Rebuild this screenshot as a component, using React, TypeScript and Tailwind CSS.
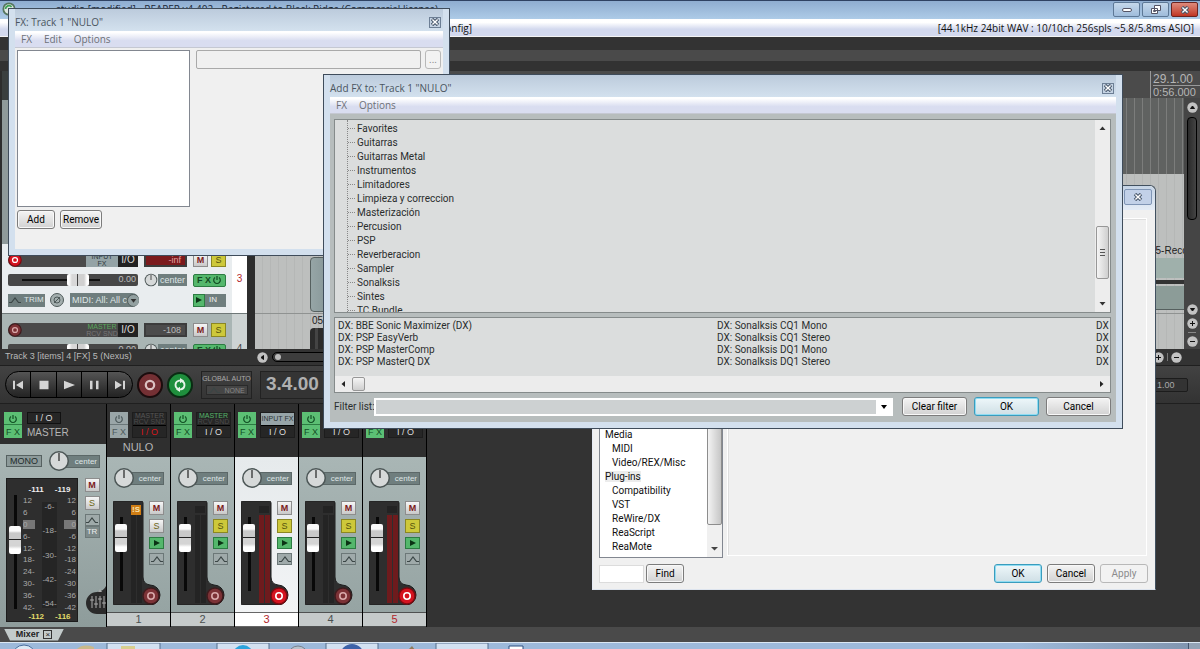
import React from 'react';
import clsx from 'clsx';

const FOLDERS = [
  'Favorites',
  'Guitarras',
  'Guitarras Metal',
  'Instrumentos',
  'Limitadores',
  'Limpieza y correccion',
  'Masterización',
  'Percusion',
  'PSP',
  'Reverberacion',
  'Sampler',
  'Sonalksis',
  'Sintes',
  'TC Bundle',
];

const PLUGINS = [
  ['DX: BBE Sonic Maximizer (DX)', 'DX: Sonalksis CQ1 Mono', 'DX'],
  ['DX: PSP EasyVerb', 'DX: Sonalksis CQ1 Stereo', 'DX'],
  ['DX: PSP MasterComp', 'DX: Sonalksis DQ1 Mono', 'DX'],
  ['DX: PSP MasterQ DX', 'DX: Sonalksis DQ1 Stereo', 'DX'],
];

const PREF_PAGES = [
  { name: 'Media', child: false },
  { name: 'MIDI', child: true },
  { name: 'Video/REX/Misc', child: true },
  { name: 'Plug-ins', child: false },
  { name: 'Compatibility', child: true },
  { name: 'VST', child: true },
  { name: 'ReWire/DX', child: true },
  { name: 'ReaScript', child: true },
  { name: 'ReaMote', child: true },
];

type Track = {
  id: number;
  name?: string;
  routing: 'none' | 'master' | 'input';
  solo: boolean;
  armed: boolean;
  selected?: boolean;
};

const TRACKS: Track[] = [
  { id: 1, name: 'NULO', routing: 'none', solo: false, armed: false },
  { id: 2, routing: 'master', solo: true, armed: false },
  { id: 3, routing: 'input', solo: true, armed: true, selected: true },
  { id: 4, routing: 'master', solo: true, armed: false },
  { id: 5, routing: 'input', solo: true, armed: true },
];

/* ---------- small shared pieces ---------- */

const WinButton: React.FC<{
  children: React.ReactNode;
  className?: string;
  primary?: boolean;
  disabled?: boolean;
}> = ({ children, className, primary, disabled }) => (
  <button
    disabled={disabled}
    className={clsx(
      'flex h-[19px] items-center justify-center rounded-[3px] border text-[10px] leading-none',
      primary && 'border-[#3a9cbd] bg-linear-to-b from-[#eef7fa] to-[#cfdfe5] text-black shadow-[inset_0_0_0_1px_#8fdcf2]',
      disabled && 'border-[#b8b8b8] bg-[#f2f2f2] text-[#8b8b8b]',
      !primary && !disabled && 'border-[#7c7c7c] bg-linear-to-b from-[#f4f4f4] to-[#d2d2d2] text-black shadow-[inset_0_0_0_1px_#f8f8f8]',
      className,
    )}
  >
    {children}
  </button>
);

const CloseGlyph = () => (
  <svg viewBox="0 0 10 8" className="h-2 w-2.5" fill="none">
    <path d="M2 1l6 6M8 1L2 7" stroke="#46566a" strokeWidth="3.4" />
    <path d="M2.4 1.4l5.2 5.2M7.6 1.4L2.4 6.6" stroke="#fff" strokeWidth="1.4" />
  </svg>
);

const PowerIcon = () => (
  <svg viewBox="0 0 10 10" className="size-2.5 shrink-0" fill="none" stroke="currentColor" strokeWidth="1.2">
    <path d="M3 2.6a3.3 3.3 0 1 0 4 0M5 1v4" />
  </svg>
);

const EnvelopeIcon = () => (
  <svg viewBox="0 0 14 10" className="h-2.5 w-3.5 shrink-0" fill="none" stroke="#3b4646" strokeWidth="1.2">
    <path d="M1 7.5h2.5L7 3l3.5 4.5H13" />
  </svg>
);

const RoundButton: React.FC<{ label: string; d: string }> = ({ label, d }) => (
  <button aria-label={label} className="size-[11px] shrink-0">
    <svg viewBox="0 0 11 11" className="size-full">
      <circle cx="5.5" cy="5.5" r="5.2" fill="#c2c2c2" />
      <path d={d} fill="#111" stroke="#111" />
    </svg>
  </button>
);

const Knob = () => (
  <svg viewBox="0 0 22 22" className="size-full">
    <circle cx="11" cy="11" r="10" fill="#4c5656" />
    <circle cx="11" cy="11" r="8.5" fill="#d6d9d9" />
    <path d="M11 3v8" stroke="#222" strokeWidth="1.2" />
  </svg>
);

const MuteButton = () => (
  <button className="flex h-3.5 w-[15px] items-center justify-center border border-[#8d8d8d] bg-linear-to-b from-[#f6f6f6] to-[#c9c9c9] text-[9px] leading-none font-bold text-[#7a1a1a]">
    M
  </button>
);

const SoloButton: React.FC<{ on?: boolean }> = ({ on }) => (
  <button
    className={clsx(
      'flex h-3.5 w-[15px] items-center justify-center border text-[9px] leading-none',
      on ? 'border-[#8b8722] bg-[#cdc83a] text-[#55510c]' : 'border-[#8d8d8d] bg-linear-to-b from-[#f6f6f6] to-[#c9c9c9] text-[#6b6413]',
    )}
  >
    S
  </button>
);

const RecordButton: React.FC<{ on: boolean; className: string }> = ({ on, className }) => (
  <button aria-label="Record arm" className={clsx('shrink-0', className)}>
    <svg viewBox="0 0 18 18" className="size-full" fill="none">
      <circle cx="9" cy="9" r="8" fill={on ? '#d5131f' : '#7c3236'} stroke={on ? '#7d0a10' : '#3f1b1d'} strokeWidth="1.5" />
      <circle cx="9" cy="9" r="3.2" stroke={on ? '#fff' : '#d9a9aa'} strokeWidth="1.6" />
    </svg>
  </button>
);

/* ---------- main window: track panel and arrange ---------- */

const TrackRow: React.FC<{ id: number; selected?: boolean; peak: string }> = ({ id, selected, peak }) => (
  <div className={clsx('flex h-[70px] shrink-0 border-b border-[#6f7878]', selected ? 'bg-[#e9edef]' : 'bg-[#a9b5b4]')}>
    <div className="flex flex-1 flex-col gap-1.5 pt-[9px] pl-1.5">
      <div className="flex h-3.5 items-center">
        <div className="flex h-3.5 w-[130px] items-center rounded-l-full bg-[#4a4a4a]">
          <RecordButton on={!!selected} className="size-3.5" />
          <span
            className={clsx(
              'ml-auto flex h-3.5 w-8 flex-col items-center justify-center text-[7px] leading-[7px] whitespace-nowrap',
              selected ? 'bg-[#94a3a6] text-[#2e3a3c]' : 'text-[#58a85c]',
            )}
          >
            <span>{selected ? 'INPUT' : 'MASTER'}</span>
            <span className={selected ? '' : 'text-[#777]'}>{selected ? 'FX' : 'RCV SND'}</span>
          </span>
          <button className="h-3.5 w-5 bg-[#222] text-[10px] leading-none text-[#ddd]">I/O</button>
        </div>
        <span
          className={clsx(
            'ml-1.5 h-3.5 w-[43px] border-2 border-[#3c3c3c] pr-1 text-right text-[9px] leading-[10px]',
            selected ? 'bg-[#7b1a1d] text-[#e2a0a0]' : 'bg-[#4c4c4c] text-[#bbb]',
          )}
        >
          {peak}
        </span>
        <span className="ml-1.5 flex gap-[3px]">
          <MuteButton />
          <SoloButton on />
        </span>
      </div>
      <div className="flex h-3.5 items-center">
        <div className="flex h-3 w-[130px] items-center rounded-xs bg-[#474747] pr-0.5">
          <input
            type="range"
            aria-label={`Volume, track ${id}`}
            defaultValue={80}
            className="ml-3.5 h-3.5 w-[78px] appearance-none bg-[linear-gradient(#111,#111)] bg-[length:100%_2px] bg-center bg-no-repeat [&::-webkit-slider-thumb]:h-3 [&::-webkit-slider-thumb]:w-[22px] [&::-webkit-slider-thumb]:appearance-none [&::-webkit-slider-thumb]:rounded-xs [&::-webkit-slider-thumb]:bg-[linear-gradient(90deg,#fff_0_2px,#d8d8d8_5px_10px,#444_10px_11px,#d0d0d0_11px_17px,#fff_20px)]"
          />
          <span className="ml-auto text-[9px] text-[#bdbdbd]">0.00</span>
        </div>
        <span className="ml-1.5 size-3.5">
          <Knob />
        </span>
        <span className="h-3 w-[29px] bg-[#6f7e7e] pl-0.5 text-[9px] leading-3 text-[#dfe6e6]">center</span>
        <button className="ml-1.5 flex h-[13px] w-[33px] items-center justify-between rounded-xs border border-[#2c7c42] bg-[#54b76c] px-[3px] text-[9px] leading-none font-bold whitespace-nowrap text-[#114a22]">
          F X <PowerIcon />
        </button>
      </div>
      <div className="flex h-3.5 items-center">
        <button className="flex h-[13px] w-[37px] items-center bg-[#6f7e7e] text-[8px] leading-none text-[#dfe6e6]">
          <EnvelopeIcon />
          <span className="ml-0.5">TRIM</span>
        </button>
        <button aria-label="Phase" className="ml-[5px] size-3.5">
          <svg viewBox="0 0 14 14" className="size-full" fill="none" stroke="#4e5a5a">
            <circle cx="7" cy="7" r="6.5" fill="#a3aeae" />
            <circle cx="7" cy="7" r="3" />
            <path d="M4 10l6-6" />
          </svg>
        </button>
        <button className="ml-1.5 flex h-3.5 w-[69px] items-center justify-between overflow-hidden rounded-r-full bg-[#6f7e7e] pl-0.5 text-[9px] leading-none whitespace-nowrap text-[#dfe6e6]">
          MIDI: All: All c
          <svg viewBox="0 0 14 14" className="size-[13px] shrink-0">
            <circle cx="7" cy="7" r="6.5" fill="#93a1a1" stroke="#4e5a5a" />
            <path d="M4 5.5h6L7 9.5z" fill="#333" />
          </svg>
        </button>
        <button className="ml-[54px] flex h-[13px] w-[33px] items-center gap-1 bg-[#6f7e7e] text-[8px] leading-none text-[#eee]">
          <span className="flex h-[13px] w-3 items-center justify-center border border-[#2c7c42] bg-[#54b76c]">
            <svg viewBox="0 0 8 8" className="size-2" fill="#0b3315">
              <path d="M1 1l6 3-6 3z" />
            </svg>
          </span>
          IN
        </button>
      </div>
    </div>
    <div
      className={clsx(
        'flex w-[15px] items-center justify-center text-[10px]',
        selected ? 'bg-white text-[#b3262c]' : 'bg-[#cdd3d3] text-[#444]',
      )}
    >
      {id}
    </div>
  </div>
);

const LANE = 'bg-[repeating-linear-gradient(90deg,#bdbfbe_0_7px,#b5b7b6_7px_8px)]';

const Arrange = () => (
  <main className="flex min-h-0 flex-1 overflow-hidden bg-[#2d2d2d]">
    <section className="flex w-[247px] shrink-0 flex-col overflow-hidden pl-0.5">
      <div className="h-[29px] shrink-0 bg-[#3a3f3f]" />
      <div className="h-36 shrink-0 bg-[#8f9a9a]" />
      <TrackRow id={3} selected peak="-inf" />
      <TrackRow id={4} peak="-108" />
    </section>
    <section className="ml-2 flex min-w-0 flex-1 flex-col overflow-hidden">
      <div className="flex h-[27px] shrink-0 justify-end bg-[#4b4b4b]">
        <div className="w-[50px] border-l border-[#999] pt-0.5 pl-0.5 text-[11px] leading-3 whitespace-nowrap text-[#b5b5b5]">
          <div className="border-b border-[#999] text-[12px]">29.1.00</div>
          <div>0:56.000</div>
        </div>
      </div>
      <div className="flex min-h-0 flex-1">
        <div className="flex min-w-0 flex-1 flex-col overflow-hidden">
          <div className="h-[76px] shrink-0 bg-[repeating-linear-gradient(90deg,#606261_0_7px,#7c7d7c_7px_8px)]" />
          <div className={clsx('h-[70px] shrink-0', LANE)} />
          <div className={clsx('flex h-[70px] shrink-0 justify-between border-b border-[#8f9291]', LANE)}>
            <div className="mt-[13px] ml-[55px] h-[55px] w-8 rounded-l-sm border border-[#56605f] bg-linear-to-r from-[#96a5a6] to-[#7d8d8e]" />
            <div className="w-[34px] overflow-hidden text-[10px] leading-[14px] whitespace-nowrap text-[#222]">
              05-Record
              <div className="h-5 bg-[#9fb0ab]" />
              <div className="my-0.5 h-1 bg-[#333]" />
              <div className="h-6 border-b border-[#56605f] bg-[#8c9c98]" />
            </div>
          </div>
          <div className={clsx('flex-1', LANE)}>
            <div className="ml-[55px] w-8 text-[10px] leading-[14px] text-[#222]">
              <div className="pl-0.5">05</div>
              <div className="h-6 rounded-tl-sm bg-[repeating-linear-gradient(90deg,#2b2b2b_0_5px,#444_5px_8px)]" />
            </div>
          </div>
        </div>
        <div className="flex w-4 flex-col items-center bg-[#454545] pt-1">
          <RoundButton label="Scroll up" d="M3.5 6.5h4L5.5 4z" />
          <div className="mt-1 h-[103px] w-2.5 rounded-sm border border-black bg-linear-to-r from-[#2a2a2a] to-[#444]" />
          <div className="mt-auto flex flex-col items-center gap-[3px] pb-0.5">
            <RoundButton label="Scroll down" d="M3.5 4.5h4L5.5 7z" />
            <RoundButton label="Zoom in vertically" d="M3 5.5h5M5.5 3v5" />
            <span className="h-px w-2 bg-[#888]" />
            <RoundButton label="Zoom out vertically" d="M3 5.5h5" />
          </div>
        </div>
      </div>
    </section>
  </main>
);

const StatusRow = () => (
  <div className="flex h-4 shrink-0 items-center bg-[#333] text-[9px] text-[#b9b9b9]">
    <span className="w-[257px] pl-[5px]">Track 3 [items] 4 [FX] 5 (Nexus)</span>
    <RoundButton label="Scroll left" d="M6.5 3.5v4L4 5.5z" />
    <div className="mx-1 flex h-2.5 flex-1 items-center rounded-full border border-black bg-[#3d3d3d] pl-0.5">
      <span className="size-1.5 rounded-full bg-[#bbb]" />
    </div>
    <div className="flex items-center gap-[3px] pr-[18px]">
      <RoundButton label="Zoom in" d="M3 5.5h5M5.5 3v5" />
      <span className="h-2 w-px bg-[#777]" />
      <RoundButton label="Zoom out" d="M3 5.5h5" />
    </div>
  </div>
);

const TRANSPORT = [
  { label: 'Go to start', d: 'M1 1h2v10H1zM11 1v10L4 6z' },
  { label: 'Stop', d: 'M1.500 1h9v10h-9z' },
  { label: 'Play', d: 'M1 1l11 5L1 11z' },
  { label: 'Pause', d: 'M2 1h2.500v10H2zM8 1h2.500v10H8z' },
  { label: 'Go to end', d: 'M1 1l7 5-7 5zM9 1h2v10H9z' },
];

const Transport = () => (
  <div className="flex h-[39px] shrink-0 items-center border-y border-[#1f1f1f] bg-linear-to-b from-[#424242] to-[#333] pl-[5px]">
    <div className="flex h-[27px] w-32 divide-x divide-black overflow-hidden rounded-full border border-black bg-linear-to-b from-[#555] to-[#232323]">
      {TRANSPORT.map((t) => (
        <button key={t.label} aria-label={t.label} className="flex flex-1 items-center justify-center">
          <svg viewBox="0 0 12 12" className="h-2.5 w-3" fill="#d4d4d4" preserveAspectRatio="none">
            <path d={t.d} />
          </svg>
        </button>
      ))}
    </div>
    <button aria-label="Record" className="ml-1 size-[26px]">
      <svg viewBox="0 0 26 26" className="size-full">
        <circle cx="13" cy="13" r="12" fill="#743034" stroke="#1b0c0d" strokeWidth="2" />
        <circle cx="13" cy="13" r="4.2" fill="none" stroke="#dcc3c3" strokeWidth="2.2" />
      </svg>
    </button>
    <button aria-label="Repeat" className="ml-1 size-[26px]">
      <svg viewBox="0 0 26 26" className="size-full" fill="none">
        <circle cx="13" cy="13" r="12" fill="#1f8f3d" stroke="#0a2c13" strokeWidth="2" />
        <path d="M11.400 17.200a4.500 4.500 0 0 1 .6-8.600h2M14.600 8.800a4.500 4.500 0 0 1-.6 8.600h-2" stroke="#e8f5ea" strokeWidth="1.8" />
        <path d="M13 6l4 2.600-4 2.600zM13 14.800l-4 2.600 4 2.600z" fill="#e8f5ea" />
      </svg>
    </button>
    <div className="ml-2 flex h-7 w-[51px] flex-col items-center justify-center gap-0.5 border border-[#222] text-[7px] leading-[9px] whitespace-nowrap text-[#aaa]">
      <span>GLOBAL AUTO</span>
      <button className="flex h-2.5 w-[42px] items-center border border-[#2a2a2a] bg-[#454545] text-[#858585]">
        <EnvelopeIcon />
        <span className="ml-1">NONE</span>
      </button>
    </div>
    <div className="ml-2 flex h-7 flex-1 items-center border border-[#222] bg-[#343434] pl-[5px] text-[19px] font-bold text-[#b0b0b0]">
      3.4.00
    </div>
    <div className="mr-3 ml-10 h-3.5 w-10 rounded-xs border border-[#1c1c1c] bg-[#333] pl-2 text-[9px] leading-3 text-[#aaa]">1.00</div>
  </div>
);

/* ---------- mixer ---------- */

const FxBlock: React.FC<{ on: boolean }> = ({ on }) => (
  <button
    className={clsx(
      'flex h-[26px] w-[18px] flex-col items-center justify-between text-[9px] leading-[12px]',
      on ? 'bg-[#5cbf74] text-[#124f24]' : 'bg-[#9aa6a8] text-[#4d5a5c]',
    )}
  >
    <span className={clsx('flex w-full justify-center border-b pt-0.5', on ? 'border-[#2c7c42]' : 'border-[#6c787a]')}>
      <PowerIcon />
    </span>
    <span>F X</span>
  </button>
);

const VFADER =
  'appearance-none bg-[linear-gradient(#080808,#080808)] bg-[length:3px_100%] bg-center bg-no-repeat [direction:rtl] [writing-mode:vertical-lr] [&::-webkit-slider-thumb]:h-7 [&::-webkit-slider-thumb]:w-3 [&::-webkit-slider-thumb]:appearance-none [&::-webkit-slider-thumb]:rounded-xs [&::-webkit-slider-thumb]:bg-[linear-gradient(#fafafa_0_5px,#c9c9c9_7px_13px,#222_13px_14px,#d4d4d4_14px_20px,#fff_23px)]';

const PanKnob = () => (
  <div className="flex items-center">
    <span className="z-10 size-[22px] shrink-0">
      <Knob />
    </span>
    <span className="-ml-1 h-[13px] flex-1 border border-[#5c6868] bg-[#6f7e7e] pr-0.5 text-right text-[8px] leading-[11px] text-[#dfe6e6]">
      center
    </span>
  </div>
);

const EnvButton = () => (
  <button aria-label="Envelopes" className="flex h-3 w-[15px] items-center justify-center border border-[#6c7878] bg-[#9faaaa]">
    <EnvelopeIcon />
  </button>
);

const ChannelStrip: React.FC<{ track: Track }> = ({ track }) => (
  <div className="flex w-16 flex-col border-r border-black">
    <div className="h-[53px] bg-[#2f2f2f] pt-2 pl-[3px]">
      <div className="flex gap-1">
        <FxBlock on={track.routing !== 'none'} />
        <div className="flex h-[26px] w-[35px] flex-col border border-[#1d1d1d] bg-[#262626] text-center text-[7px] leading-[7px] whitespace-nowrap">
          {track.routing === 'input' ? (
            <span className="h-3 bg-[#97a4a8] leading-3 text-[#2b3436]">INPUT FX</span>
          ) : (
            <span className="flex h-3 flex-col leading-[6px]">
              <span className={track.routing === 'master' ? 'text-[#55b569]' : 'text-[#555]'}>MASTER</span>
              <span className="text-[#4c4c4c]">RCV SND</span>
            </span>
          )}
          <button className={clsx('h-3 border-t border-black text-[9px] leading-3', track.routing === 'none' ? 'text-[#d8161c]' : 'text-[#ddd]')}>
            I / O
          </button>
        </div>
      </div>
      <div className="pt-0.5 pr-1 text-center text-[11px] leading-[14px] text-[#b5b5b5]">{track.name}</div>
    </div>
    <div className={clsx('h-[155px] pt-2.5 pr-1.5 pl-1.5', track.selected ? 'bg-linear-to-b from-[#e6eaec] to-[#f2f4f5]' : 'bg-linear-to-b from-[#a9b6b5] to-[#96a4a3]')}>
      <PanKnob />
      <div className="relative mt-3 flex h-[104px]">
        <svg viewBox="0 0 52 104" className="absolute inset-0 h-[104px] w-[52px]">
          <path d="M2 0h26q2 0 2 2v74q0 7 7 8a10 10 0 0 1 0 20H2q-2 0-2-2V2q0-2 2-2z" fill="#2e2e2e" stroke="#1c1c1c" />
          <path d="M18 5h10v7H18z" fill="#232323" />
          <path d="M18 14h5v88h-5zM24 14h5v88h-5z" fill={track.armed ? '#6e1b1d' : '#242424'} />
        </svg>
        <input
          type="range"
          aria-label={`Fader ${track.id}`}
          defaultValue={84}
          className={clsx('relative mt-4 ml-0.5 h-[74px] w-3', VFADER)}
        />
        {!track.solo && (
          <span className="relative mt-1 ml-1 h-2.5 w-2.5 bg-[#cf7d14] text-center text-[8px] leading-2.5 font-bold text-[#f6e3b0]">!S</span>
        )}
        <div className="relative ml-auto flex flex-col gap-1">
          <MuteButton />
          <SoloButton on={track.solo} />
          <button aria-label="Monitor" className="flex h-3 w-[15px] items-center justify-center border border-[#2c7c42] bg-[#54b76c]">
            <svg viewBox="0 0 8 8" className="size-2" fill="#0b3315">
              <path d="M1 1l6 3-6 3z" />
            </svg>
          </button>
          <EnvButton />
        </div>
        <RecordButton on={track.armed} className="absolute right-1 bottom-0 size-[18px]" />
      </div>
    </div>
    <div
      className={clsx(
        'h-[15px] border-y border-black/60 text-center text-[11px] leading-[13px]',
        track.selected ? 'bg-white' : 'bg-[#c5caca]',
        track.armed ? 'text-[#b3262c]' : 'text-[#4a5050]',
      )}
    >
      {track.id}
    </div>
  </div>
);

const Scale: React.FC<{ marks: string[]; className: string }> = ({ marks, className }) => (
  <div className={clsx('flex flex-col justify-between text-[8px] leading-[9px] text-[#aaa]', className)}>
    {marks.map((m) => (
      <span key={m} className={m === '0' ? 'bg-[#777]' : ''}>
        {m}
      </span>
    ))}
  </div>
);

const MasterStrip = () => (
  <div className="flex w-[107px] flex-col border-r border-black">
    <div className="flex h-10 gap-[5px] bg-[#2f2f2f] pt-2 pl-1">
      <FxBlock on />
      <div>
        <button className="block h-3 w-[34px] border border-[#111] bg-[#262626] text-[9px] leading-2.5 text-[#ddd]">I / O</button>
        <div className="pt-px text-[10px] leading-4 text-[#b5b5b5]">MASTER</div>
      </div>
    </div>
    <div className="flex-1 bg-linear-to-b from-[#a9b6b5] to-[#8e9c9b] pt-1.5 pl-1.5">
      <div className="flex items-center gap-1.5 pr-1.5">
        <button className="h-3 w-9 border border-[#566161] bg-[#8d9a9a] text-[9px] leading-2.5 text-[#222c2c]">MONO</button>
        <div className="flex-1">
          <PanKnob />
        </div>
      </div>
      <div className="mt-1.5 flex">
        <div className="flex h-36 w-[72px] border border-[#1c1c1c] bg-[#2e2e2e]">
          <input type="range" aria-label="Master fader" defaultValue={64} className={clsx('mt-4 ml-0.5 h-[114px] w-3', VFADER)} />
          <div className="flex flex-1 flex-col pt-1.5 pr-px pl-0.5">
            <div className="flex justify-around text-[8px] leading-[10px] font-bold text-[#eee]">
              <span>-111</span>
              <span>-119</span>
            </div>
            <div className="flex justify-between pt-px">
              <Scale marks={['12', '6', '0', '6-', '12-', '18-', '24-', '30-', '36-', '42-']} className="h-[116px]" />
              <Scale marks={['-6-', '-18-', '-30-', '-42-', '-54-']} className="mt-1.5 h-[106px] bg-[#252525] text-center" />
              <Scale marks={['12', '6', '0', '-6', '-12', '-18', '-24', '-30', '-36', '-42']} className="h-[116px] text-right" />
            </div>
            <div className="flex justify-around text-[8px] leading-[9px] font-bold text-[#e2dc6a]">
              <span>-112</span>
              <span>-116</span>
            </div>
          </div>
        </div>
        <div className="flex flex-1 flex-col items-center gap-1">
          <MuteButton />
          <SoloButton />
          <div>
            <EnvButton />
            <button className="block h-3 w-[15px] border border-[#6c7878] bg-[#7d8a8a] text-[8px] leading-2.5 text-[#eee]">TR</button>
          </div>
          <svg viewBox="0 0 21 28" className="mt-auto mb-2 ml-auto h-7 w-[21px] shrink-0" stroke="#aaa" fill="none">
            <path d="M21 0q-2 5-9 6a11 11 0 0 0 0 22h9z" fill="#2a2a2a" stroke="none" />
            <path d="M13 6l2-3 2 3z" fill="#aaa" stroke="none" />
            <path d="M7 10v12M11 10v12M15 10v12M19 10v12M5 14h4M9 18h4M13 13h4M17 17h4" />
          </svg>
        </div>
      </div>
    </div>
  </div>
);

const Mixer = () => (
  <>
    <section className="flex h-[223px] shrink-0 bg-[#333]">
      <MasterStrip />
      {TRACKS.map((t) => (
        <ChannelStrip key={t.id} track={t} />
      ))}
    </section>
    <div className="flex h-[15px] shrink-0 items-center bg-[#4a4a4a] pl-1">
      <button className="flex h-3 w-[60px] items-center justify-center gap-1 bg-[#c3cbcb] text-[9px] leading-none font-bold text-[#222] [clip-path:polygon(0_0,100%_0,90%_100%,10%_100%)]">
        Mixer
        <span className="flex size-[9px] items-center justify-center border border-[#333] text-[8px] leading-none font-normal">×</span>
      </button>
    </div>
  </>
);

const Taskbar = () => (
  <footer className="flex h-[7px] shrink-0 overflow-hidden border-t border-[#dbe7f3] bg-linear-to-r from-[#9db9da] from-85% to-[#7f93ad]">
    <svg viewBox="0 0 540 7" className="h-[7px] w-[540px]">
      <circle cx="24" cy="14" r="12" fill="#dce9f5" stroke="#4a6e9e" />
      <path d="M76 7q6-7 18-3v3z" fill="#c9b98a" />
      <path d="M107 0h53v7h-53zM217 0h52v7h-52zM326 0h52v7h-52zM436 0h52v7h-52z" fill="#d3e1f1" stroke="#56718f" />
      <path d="M121 3h14v4h-14z" fill="#d8cf8f" />
      <circle cx="243" cy="12" r="10" fill="#2ba3dc" />
      <circle cx="298" cy="13" r="10" fill="#b9c3cd" stroke="#78828e" />
      <circle cx="352" cy="13" r="12" fill="#3d62a8" />
      <path d="M408 7l4-4 3 4z" fill="#8d7d5c" />
      <path d="M509 3h14v4h-14z" fill="#fff" stroke="#2d4f80" />
    </svg>
    <span className="ml-auto w-3 border-l border-[#44566e] bg-[#93a3b6]" />
  </footer>
);

const MainWindow = () => (
  <div className="flex h-full flex-col">
    <header className="flex h-[19px] shrink-0 items-start border-t border-[#2f4262] bg-linear-to-b from-[#8fadd0] to-[#adcbe7]">
      <svg viewBox="0 0 16 16" className="mt-px ml-0.5 size-3.5" fill="none">
        <circle cx="8" cy="8" r="6.5" fill="#dfe7e2" stroke="#56765e" strokeWidth="2" />
        <path d="M4 8a4 4 0 0 1 7-2.5" stroke="#3fa153" strokeWidth="2" />
      </svg>
      <h1 className="ml-10 text-[10px] leading-[17px] text-[#1c2836] [font-family:'Open_Sans',sans-serif]">
        studio [modified] - REAPER v4.402 - Registered to Black Ridge (Commercial license)
      </h1>
      <div className="mt-px mr-0.5 ml-auto flex gap-0.5">
        <button aria-label="Minimize" className="flex h-[15px] w-[27px] items-center justify-center rounded-xs border border-[#5d7896] bg-linear-to-b from-[#c5d8eb] to-[#9fbcdb]">
          <span className="h-1 w-2.5 rounded-xs border border-[#556] bg-white" />
        </button>
        <button aria-label="Restore" className="flex h-[15px] w-[27px] items-center justify-center rounded-xs border border-[#5d7896] bg-linear-to-b from-[#c5d8eb] to-[#9fbcdb]">
          <svg viewBox="0 0 12 10" className="h-2.5 w-3" fill="#fff" stroke="#556">
            <path d="M4.5.5h6v5h-6zM1.500 3.500h6v5h-6zM3.500 5.500h2v1h-2z" />
          </svg>
        </button>
        <button aria-label="Close" className="flex h-[15px] w-[27px] items-center justify-center rounded-xs border border-[#6b2420] bg-linear-to-b from-[#de8a7c] to-[#bf3422]">
          <CloseGlyph />
        </button>
      </div>
    </header>
    <div className="flex h-[18px] shrink-0 items-center justify-between border-b border-[#f4f4f4] bg-linear-to-b from-white from-20% to-[#d3d9ee] to-60% pr-1.5 text-[10px] leading-none text-[#111] [font-family:'Open_Sans',sans-serif]">
      <span className="w-[472px] text-right">config]</span>
      <span>[44.1kHz 24bit WAV : 10/10ch 256spls ~5.8/5.8ms ASIO]</span>
    </div>
    <div className="h-[34px] shrink-0 bg-[linear-gradient(#333_0_13px,#4a4a4a_13px_24px,#323232_24px)]" />
    <Arrange />
    <StatusRow />
    <Transport />
    <Mixer />
    <Taskbar />
  </div>
);

/* ---------- floating dialogs ---------- */

const DialogTitle: React.FC<{ title: string; menu: string[] }> = ({ title, menu }) => (
  <>
    <div className="flex h-[22px] items-center justify-between bg-linear-to-b from-[#bccbdc] to-[#d3e1ee] pt-1 pr-0.5 text-[10px] text-[#4a5560] [font-family:'Open_Sans',sans-serif]">
      <h2>{title}</h2>
      <button aria-label={`Close ${title}`} className="flex h-[11px] w-3 items-center justify-center border border-[#6d7f95] bg-[#c5d3e3]">
        <CloseGlyph />
      </button>
    </div>
    <nav className="flex h-[17px] items-center gap-3 border-b border-[#c5c8d2] bg-linear-to-b from-white from-10% to-[#d9ddf0] to-60% pl-1.5 text-[10px] leading-none text-[#6d7178] [font-family:'Open_Sans',sans-serif]">
      {menu.map((m) => (
        <button key={m}>{m}</button>
      ))}
    </nav>
  </>
);

const PreferencesWindow = () => (
  <div className="absolute top-[185px] left-[592px] flex h-[405px] w-[564px] flex-col rounded-t-md border border-[#41505f] border-b-[#dde4ee] border-l-[#e6ebf5] bg-[#f0f0f0] px-1.5 pb-1.5 text-[10px] [font-family:Roboto,sans-serif]">
    <div className="-mx-1.5 flex h-6 justify-end rounded-t-md bg-linear-to-b from-[#c5d4e6] to-[#e4ecf6] pt-[3px] pr-[3px]">
      <button aria-label="Close preferences" className="flex h-4 w-7 items-center justify-center rounded-xs border border-[#7f95b5] bg-[#c2d1e8]">
        <CloseGlyph />
      </button>
    </div>
    <div className="flex flex-1 gap-1 pt-2">
      <div className="flex w-[124px] items-end border border-[#828790] bg-white">
        <ul className="flex-1 pb-[3px] pl-[5px] leading-[14px] text-[#111]">
          {PREF_PAGES.map((p) => (
            <li key={p.name} className={p.child ? 'pl-[7px]' : ''}>
              <span className={p.name === 'Plug-ins' ? 'bg-[#ececec]' : ''}>{p.name}</span>
            </li>
          ))}
        </ul>
        <div className="flex h-full w-[15px] flex-col bg-[#f0f0f0]">
          <div className="flex-1 rounded-b-xs border border-[#8d8d8d] bg-linear-to-r from-[#f3f3f3] to-[#c6c6c6]" />
          <svg viewBox="0 0 15 32" className="h-8 w-[15px]" fill="#444">
            <path d="M4 22h7l-3.500 3.500z" />
          </svg>
        </div>
      </div>
      <div className="mr-0.5 mb-0.5 flex-1 border border-white shadow-[inset_1px_1px_0_#dedede]" />
    </div>
    <div className="flex items-center pt-1.5 pr-px">
      <input aria-label="Find in preferences" className="h-[18px] w-[45px] border border-[#dcdcdc] bg-white" />
      <WinButton className="ml-0.5 w-[38px]">Find</WinButton>
      <div className="ml-auto flex gap-[5px]">
        <WinButton primary className="w-12">OK</WinButton>
        <WinButton className="w-12">Cancel</WinButton>
        <WinButton disabled className="w-12">Apply</WinButton>
      </div>
    </div>
  </div>
);

const FxChainWindow = () => (
  <div className="absolute top-2 left-2 flex h-[248px] w-[442px] flex-col border border-[#3f4c5b] bg-[#d3e0ee] px-1.5 pb-1.5 [font-family:Roboto,sans-serif]">
    <DialogTitle title={'FX: Track 1 "NULO"'} menu={['FX', 'Edit', 'Options']} />
    <div className="flex flex-1 gap-1.5 bg-[#f0f0f0] pt-0.5 pr-0.5 pl-0.5">
      <div>
        <div className="h-[157px] w-[173px] border border-[#828790] bg-white" />
        <div className="flex gap-[5px] pt-[3px]">
          <WinButton className="w-[38px]">Add</WinButton>
          <WinButton className="w-[42px]">Remove</WinButton>
        </div>
      </div>
      <input aria-label="Preset" disabled className="h-[19px] flex-1 rounded-xs border border-[#a9a9a9] bg-[#f0f0f0]" />
      <WinButton disabled className="-ml-0.5 w-4">...</WinButton>
    </div>
  </div>
);

const AddFxWindow = () => (
  <div className="absolute top-[74px] left-[323px] flex h-[355px] w-[800px] flex-col border border-[#3f4c5b] bg-[#d3e0ee] px-1.5 pb-1.5 text-[10px] text-[#2a2d2d] [font-family:Roboto,sans-serif]">
    <DialogTitle title={'Add FX to: Track 1 "NULO"'} menu={['FX', 'Options']} />
    <div className="flex min-h-0 flex-1 flex-col bg-[#b7bdbd] px-1 pt-[5px]">
      <div className="mr-px flex h-[194px] shrink-0 overflow-hidden border border-[#858b8b] bg-[#dbdddd]">
        <ul className="ml-3 h-full flex-1 border-l border-dotted border-[#888] pt-px">
          {FOLDERS.map((f) => (
            <li key={f} className="flex h-3.5 items-center gap-0.5 whitespace-nowrap">
              <span className="w-[7px] border-t border-dotted border-[#888]" />
              {f}
            </li>
          ))}
        </ul>
        <div className="flex w-[15px] flex-col items-center bg-[#ededed]">
          <svg viewBox="0 0 15 106" className="h-[106px] w-[15px]" fill="#333">
            <path d="M4.500 10h6L7.500 6.500z" />
          </svg>
          <div className="flex h-[53px] w-[13px] flex-col items-center justify-center gap-0.5 rounded-xs border border-[#979797] bg-linear-to-r from-[#f5f5f5] to-[#cfcfcf]">
            <span className="h-px w-[5px] bg-[#555]" />
            <span className="h-px w-[5px] bg-[#555]" />
            <span className="h-px w-[5px] bg-[#555]" />
          </div>
          <svg viewBox="0 0 15 33" className="h-[33px] w-[15px]" fill="#333">
            <path d="M4.500 23h6l-3 3.500z" />
          </svg>
        </div>
      </div>
      <div className="mt-1 mr-px flex h-[76px] shrink-0 flex-col overflow-hidden border border-[#858b8b] bg-[#dbdddd]">
        <div className="flex-1 overflow-hidden pt-0.5">
          <table className="w-full table-fixed leading-3 whitespace-nowrap">
            <colgroup>
              <col />
              <col />
              <col className="w-[17px]" />
            </colgroup>
            <tbody>
              {PLUGINS.map((row) => (
                <tr key={row[0]}>
                  {row.map((name, i) => (
                    <td key={i} className="p-0 pl-[3px]">
                      {name}
                    </td>
                  ))}
                </tr>
              ))}
            </tbody>
          </table>
        </div>
        <div className="flex h-4 items-center bg-[#ececec]">
          <svg viewBox="0 0 17 16" className="h-4 w-[17px]" fill="#222">
            <path d="M10 5v6L6.500 8z" />
          </svg>
          <span className="h-3.5 w-[13px] rounded-xs border border-[#979797] bg-linear-to-b from-[#f5f5f5] to-[#cfcfcf]" />
          <svg viewBox="0 0 17 16" className="ml-auto h-4 w-[17px]" fill="#222">
            <path d="M7 5v6l3.500-3z" />
          </svg>
        </div>
      </div>
      <div className="mr-px flex items-center gap-[7px] pt-1">
        <label htmlFor="filter" className="w-[33px] whitespace-nowrap">
          Filter list:
        </label>
        <div className="flex h-[18px] flex-1 bg-white p-0.5">
          <input id="filter" className="min-w-0 flex-1 bg-[#cdd1d2]" />
          <button aria-label="Filter history" className="flex w-[15px] items-center justify-center">
            <svg viewBox="0 0 6 4" className="h-1 w-1.5">
              <path d="M0 0h6L3 4z" />
            </svg>
          </button>
        </div>
        <WinButton className="ml-0.5 w-[65px]">Clear filter</WinButton>
        <WinButton primary className="w-[65px]">OK</WinButton>
        <WinButton className="w-[65px]">Cancel</WinButton>
      </div>
    </div>
  </div>
);

const App: React.FC = () => (
  <div className="relative h-screen w-full overflow-hidden bg-[#333] [font-family:'Liberation_Sans',Arial,sans-serif]">
    <MainWindow />
    <PreferencesWindow />
    <FxChainWindow />
    <AddFxWindow />
  </div>
);

export default App;
